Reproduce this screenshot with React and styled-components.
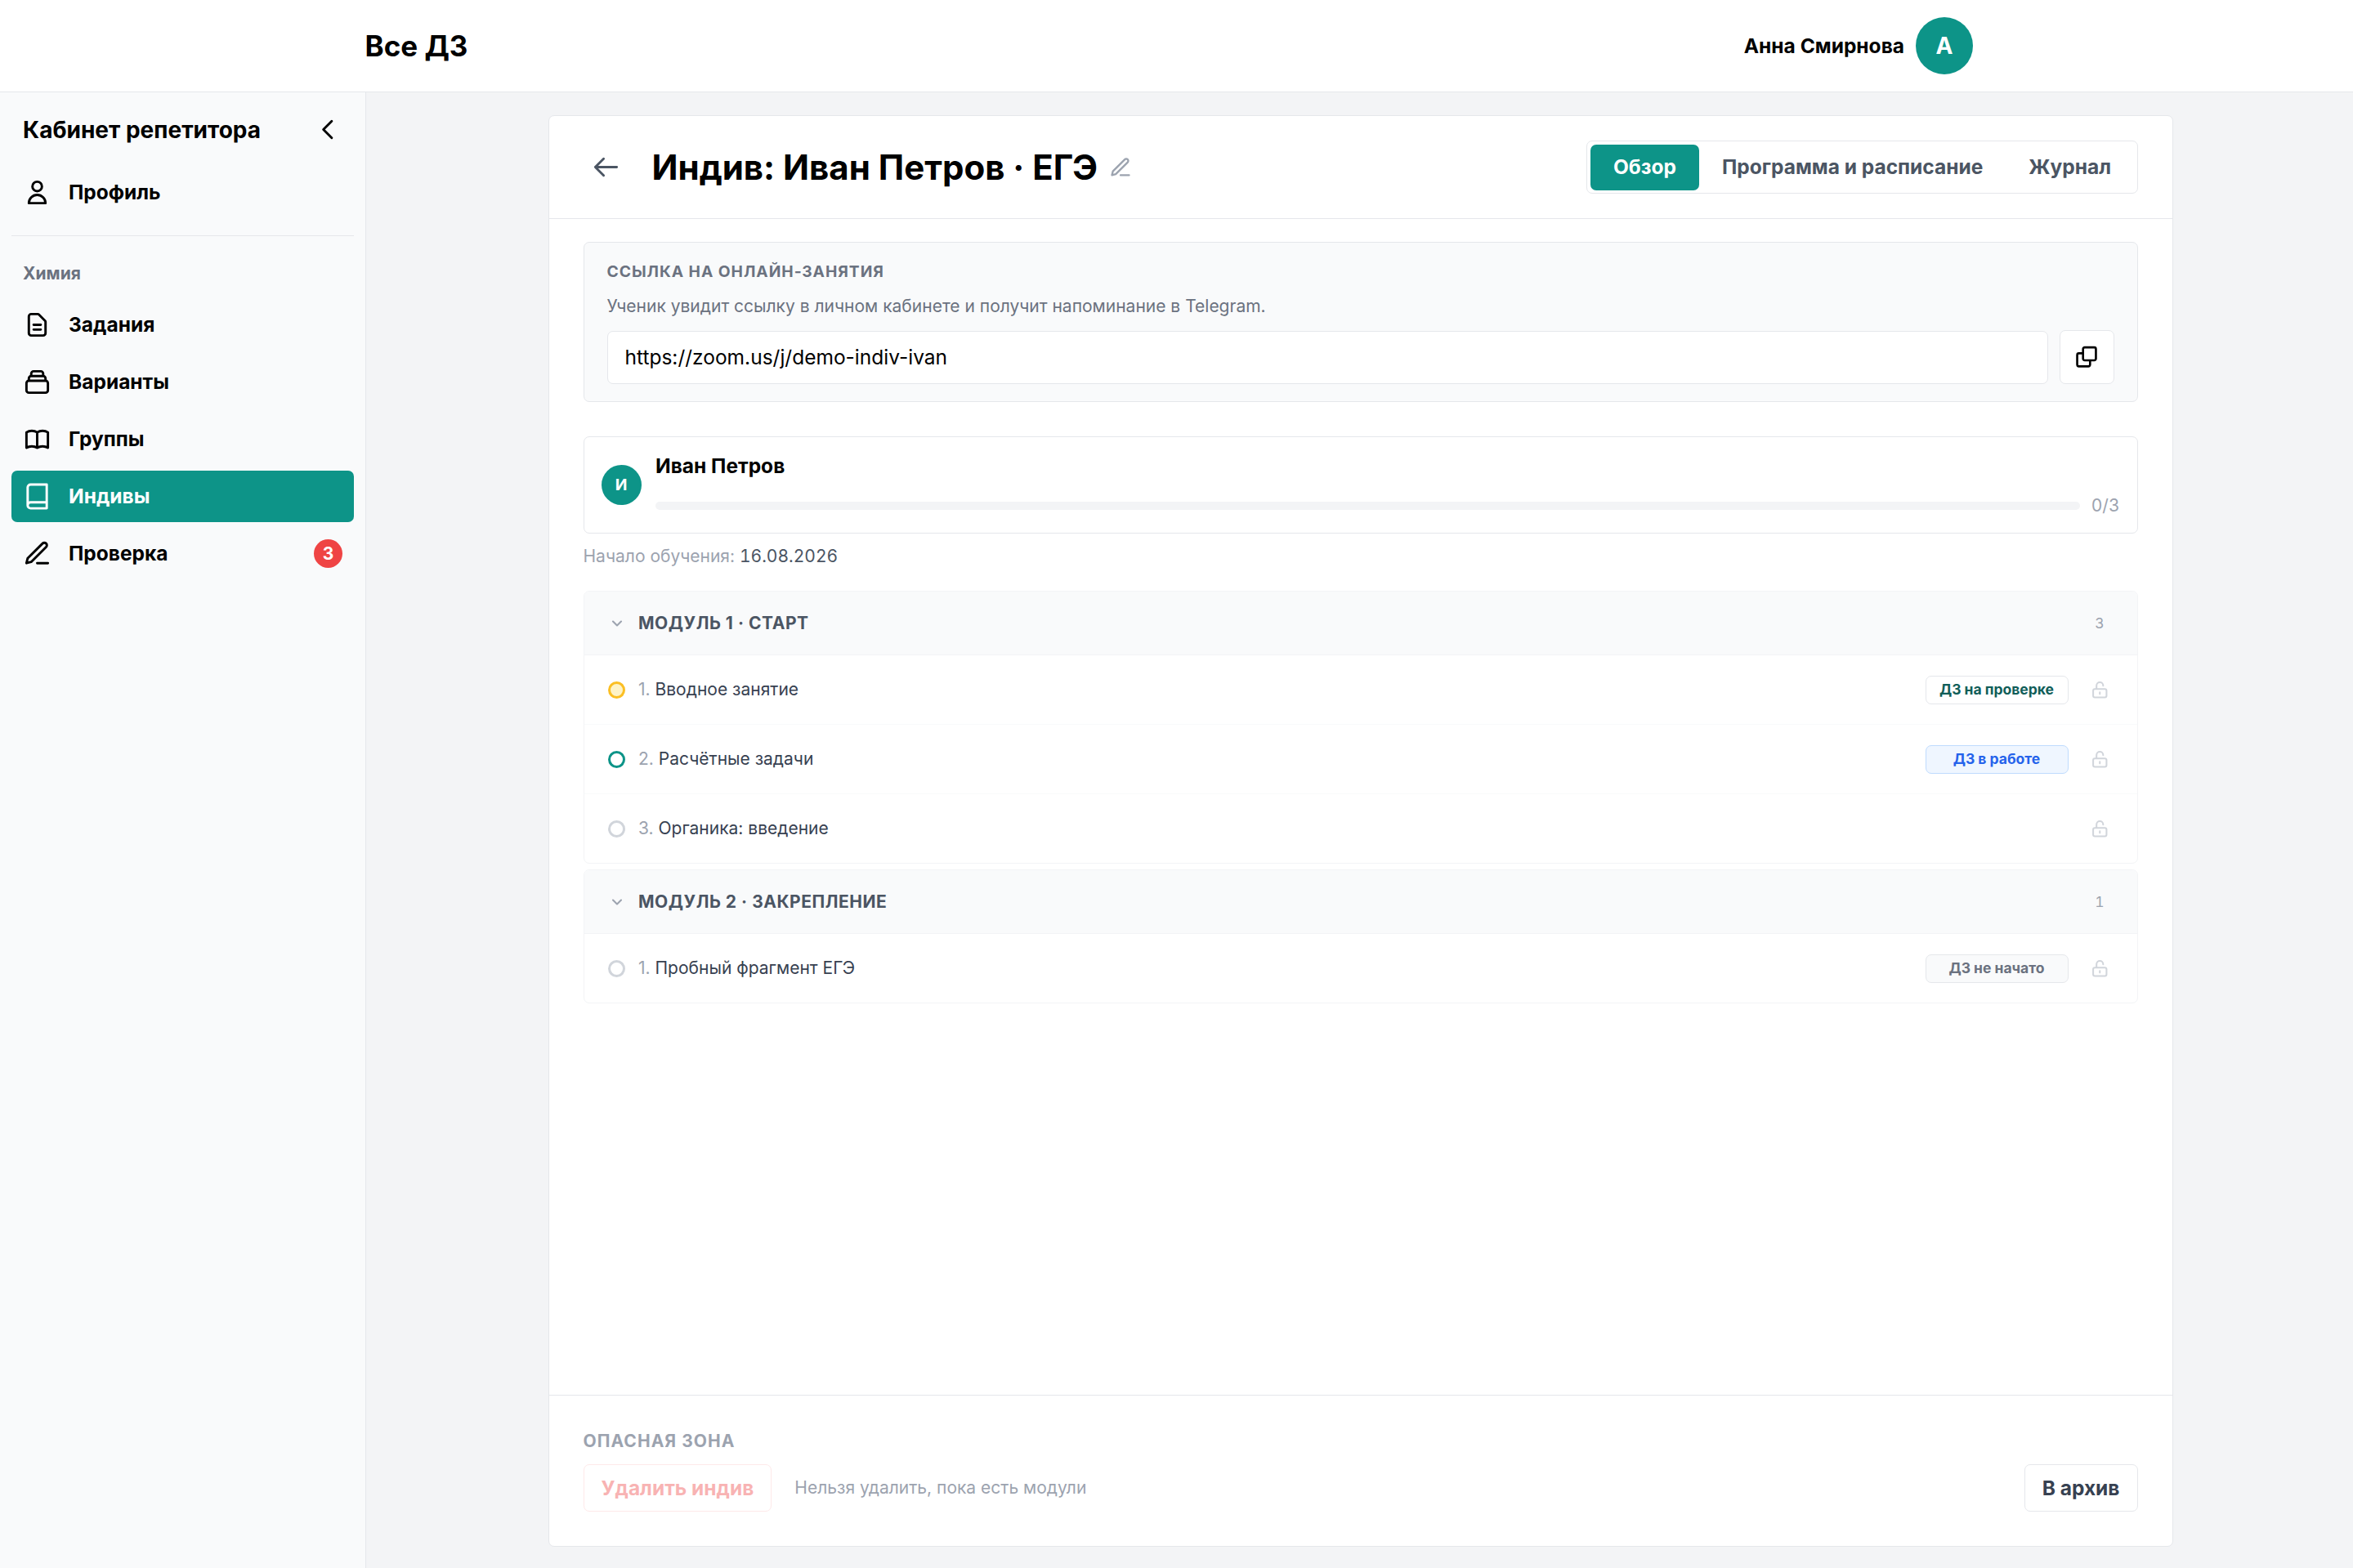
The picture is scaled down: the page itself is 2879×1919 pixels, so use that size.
import styled, { createGlobalStyle } from "styled-components"

const GlobalStyle = createGlobalStyle`
  * {
    box-sizing: border-box;
    margin: 0;
    padding: 0;
  }
  html {
    font-size: 28px;
  }
  body {
    font-family: Inter, "Noto Sans", sans-serif;
    font-size: 0.875rem;
    line-height: 1.25rem;
    color: #000000;
    background-color: #f3f4f6;
  }
  button, input {
    font: inherit;
    color: inherit;
    background: none;
    border: none;
  }
`

const PageWrapper = styled.div`
  display: flex;
  flex-direction: column;
  height: 100vh;
  overflow: hidden;
`

const Header = styled.header`
  display: flex;
  justify-content: space-between;
  align-items: center;
  height: 113px;
  padding: 0 465px 0 446.5px;
  background-color: #ffffff;
  border-bottom: 1px solid #e5e7eb;
`

const Brand = styled.div`
  font-size: 1.25rem;
  line-height: 1.75rem;
  font-weight: 700;
`

const UserBox = styled.div`
  display: flex;
  align-items: center;
  gap: 0.5rem;
  font-weight: 700;
`

const Avatar = styled.div`
  display: flex;
  justify-content: center;
  align-items: center;
  flex-shrink: 0;
  width: ${props => props.$size};
  height: ${props => props.$size};
  border-radius: 50%;
  background-color: #0d9488;
  color: #ffffff;
  font-size: ${props => props.$font};
  font-weight: 700;
`

const Body = styled.div`
  display: flex;
  flex: 1;
  min-height: 0;
`

const Sidebar = styled.aside`
  width: 16rem;
  flex-shrink: 0;
  padding: 1rem 0.5rem;
  background-color: #f9fafb;
  border-right: 1px solid #e5e7eb;
`

const SidebarTop = styled.div`
  display: flex;
  justify-content: space-between;
  align-items: center;
  height: 1.25rem;
  padding: 0 0.5rem;
  margin-bottom: 1rem;
  font-size: 1rem;
  line-height: normal;
  font-weight: 700;
`

const NavList = styled.ul`
  display: flex;
  flex-direction: column;
  gap: 0.25rem;
  list-style: none;
`

const NavItem = styled.li`
  display: flex;
  align-items: center;
  gap: 0.75rem;
  height: 2.25rem;
  padding: 0 0.5rem;
  border-radius: 0.25rem;
  font-weight: 700;
  cursor: pointer;
  ${props => props.$active ? "background-color: #0d9488; color: #ffffff;" : ""}
`

const NavBadge = styled.span`
  display: flex;
  justify-content: center;
  align-items: center;
  width: 1.25rem;
  height: 1.25rem;
  margin-left: auto;
  border-radius: 50%;
  background-color: #ef4444;
  color: #ffffff;
  font-size: 0.75rem;
`

const NavDivider = styled.div`
  height: 1px;
  margin: 0.75rem 0 32px;
  background-color: #e5e7eb;
`

const NavCaption = styled.div`
  padding: 0 0.5rem;
  margin-bottom: 17px;
  font-size: 0.75rem;
  line-height: 1rem;
  font-weight: 700;
  color: #6b7280;
`

const Main = styled.main`
  flex: 1;
  padding: 1rem 0 0 222.5px;
`

const Card = styled.section`
  display: flex;
  flex-direction: column;
  width: 71rem;
  height: 1752px;
  background-color: #ffffff;
  border: 1px solid #e5e7eb;
  border-radius: 0.25rem;
`

const CardHeader = styled.div`
  display: flex;
  align-items: center;
  height: 4.5rem;
  padding: 0 1.5rem;
  border-bottom: 1px solid #e5e7eb;
`

const BackButton = styled.button`
  display: flex;
  justify-content: center;
  align-items: center;
  width: 2rem;
  height: 2rem;
  margin-right: 1rem;
  color: #4b5563;
`

const Title = styled.h1`
  font-size: 1.5rem;
  line-height: 2rem;
  font-weight: 700;
`

const EditButton = styled.button`
  display: flex;
  margin-left: 0.5rem;
  color: #9ca3af;
`

const Tabs = styled.div`
  display: flex;
  margin-left: auto;
  padding: 0.125rem;
  border: 1px solid #e5e7eb;
  border-radius: 0.25rem;
`

const Tab = styled.button`
  height: 2rem;
  padding: 0 1rem;
  border-radius: 0.25rem;
  font-weight: 700;
  ${props => props.$active ? "background-color: #0d9488; color: #ffffff;" : "color: #4b5563;"}
`

const CardBody = styled.div`
  flex: 1;
  padding: 1rem 1.5rem;
`

const LinkBox = styled.div`
  padding: 0.75rem 1rem;
  margin-bottom: 1.5rem;
  background-color: #f9fafb;
  border: 1px solid #e5e7eb;
  border-radius: 0.25rem;
`

const LinkCaption = styled.div`
  font-size: 0.6875rem;
  line-height: 1rem;
  font-weight: 700;
  letter-spacing: 0.05em;
  text-transform: uppercase;
  color: #6b7280;
`

const LinkHint = styled.p`
  margin: 0.5rem 0;
  font-size: 0.75rem;
  line-height: 29.5px;
  color: #6b7280;
`

const LinkRow = styled.div`
  display: flex;
  align-items: flex-end;
  gap: 0.5rem;
`

const LinkInput = styled.input`
  flex: 1;
  height: 65px;
  padding: 0 0.75rem 2px;
  background-color: #ffffff;
  border: 1px solid #e5e7eb;
  border-radius: 0.25rem;
`

const CopyButton = styled.button`
  display: flex;
  justify-content: center;
  align-items: center;
  width: 2.375rem;
  height: 2.375rem;
  background-color: #ffffff;
  border: 1px solid #e5e7eb;
  border-radius: 0.25rem;
`

const StudentBox = styled.div`
  display: flex;
  align-items: center;
  gap: 0.625rem;
  height: 119px;
  padding: 0 0.75rem;
  border: 1px solid #e5e7eb;
  border-radius: 0.25rem;
`

const StudentInfo = styled.div`
  flex: 1;
`

const StudentName = styled.div`
  margin-bottom: 20px;
  line-height: 1.25;
  font-weight: 700;
`

const ProgressRow = styled.div`
  display: flex;
  align-items: center;
  gap: 0.5rem;
  font-size: 0.75rem;
  line-height: 26px;
  color: #9ca3af;
  font-variant-numeric: tabular-nums;
`

const ProgressTrack = styled.div`
  flex: 1;
  height: 0.375rem;
  border-radius: 0.25rem;
  background-color: #f3f4f6;
  overflow: hidden;
`

const ProgressBar = styled.div`
  height: 100%;
  background-color: #0d9488;
`

const StartDate = styled.p`
  margin: 0.5rem 0 1rem;
  font-size: 0.75rem;
  line-height: 1rem;
  color: #9ca3af;

  span {
    color: #4b5563;
    font-variant-numeric: tabular-nums;
  }
`

const Module = styled.div`
  margin-bottom: 0.25rem;
  border: 1px solid #f3f4f6;
  border-radius: 0.25rem;
  overflow: hidden;
`

const ModuleHeader = styled.div`
  display: flex;
  align-items: center;
  gap: 0.5rem;
  height: 78px;
  padding: 0 1rem;
  background-color: #f9fafb;
  border-bottom: 1px solid #f3f4f6;
`

const MarkCell = styled.div`
  display: flex;
  justify-content: center;
  width: 0.875rem;
  color: #9ca3af;
`

const ModuleName = styled.div`
  flex: 1;
  font-size: 0.75rem;
  line-height: 1rem;
  font-weight: 700;
  letter-spacing: 0.025em;
  text-transform: uppercase;
  color: #4b5563;
`

const EndCell = styled.div`
  display: flex;
  justify-content: center;
  width: 1.25rem;
  font-size: 0.625rem;
  line-height: 1rem;
  font-variant-numeric: tabular-nums;
  color: ${props => props.$muted ? "#d1d5db" : "#9ca3af"};
`

const LessonRow = styled.div`
  display: flex;
  align-items: center;
  gap: 0.5rem;
  height: 85px;
  padding: 0 1rem;
  border-bottom: 1px solid #f9fafb;

  &:last-child {
    height: 3rem;
    border-bottom: none;
  }
`

const dotColors = {
  review: "border-color: #fbbf24; background-color: #fef3c7;",
  progress: "border-color: #0d9488;",
  idle: "border-color: #d1d5db;",
}

const Dot = styled.span`
  flex-shrink: 0;
  width: 0.75rem;
  height: 0.75rem;
  border: 3px solid;
  border-radius: 50%;
  ${props => dotColors[props.$state]}
`

const LessonName = styled.div`
  flex: 1;
  font-size: 0.75rem;
  line-height: 1rem;
  color: #374151;

  span {
    color: #9ca3af;
  }
`

const badgeColors = {
  review: "color: #115e59; background-color: #ffffff; border-color: #e5e7eb;",
  progress: "color: #2563eb; background-color: #eff6ff; border-color: #bfdbfe;",
  idle: "color: #6b7280; background-color: #f9fafb; border-color: #e5e7eb;",
}

const StatusBadge = styled.span`
  display: flex;
  justify-content: center;
  align-items: center;
  width: 6.25rem;
  height: 1.25rem;
  margin-right: 0.25rem;
  border: 1px solid;
  border-radius: 0.25rem;
  font-size: 0.625rem;
  line-height: 1;
  font-weight: 700;
  ${props => badgeColors[props.$state]}
`

const DangerZone = styled.div`
  padding: 1.5rem;
  border-top: 1px solid #e5e7eb;
`

const DangerCaption = styled.div`
  margin-bottom: 0.5rem;
  font-size: 0.75rem;
  line-height: 1rem;
  font-weight: 700;
  letter-spacing: 0.05em;
  text-transform: uppercase;
  color: #9ca3af;
`

const DangerRow = styled.div`
  display: flex;
  align-items: center;
`

const ActionButton = styled.button`
  height: 58px;
  padding: 0 0.75rem;
  border: 1px solid ${props => props.$danger ? "#fecaca" : "#e5e7eb"};
  border-radius: 0.25rem;
  font-weight: 700;
  color: ${props => props.$danger ? "#ef4444" : "#374151"};

  &:disabled {
    opacity: 0.4;
  }
`

const DangerHint = styled.span`
  flex: 1;
  margin-left: 1rem;
  font-size: 0.75rem;
  line-height: 1rem;
  color: #9ca3af;
`

const icons = {
  user: "M16 7a4 4 0 11-8 0 4 4 0 018 0zM12 14a7 7 0 00-7 7h14a7 7 0 00-7-7z",
  document: "M9 12h6m-6 4h6m2 5H7a2 2 0 01-2-2V5a2 2 0 012-2h5.586a1 1 0 01.707.293l5.414 5.414a1 1 0 01.293.707V19a2 2 0 01-2 2z",
  collection: "M19 11H5m14 0a2 2 0 012 2v6a2 2 0 01-2 2H5a2 2 0 01-2-2v-6a2 2 0 012-2m14 0V9a2 2 0 00-2-2M5 11V9a2 2 0 012-2m0 0V5a2 2 0 012-2h6a2 2 0 012 2v2M7 7h10",
  bookOpen: "M12 6.253v13m0-13C10.832 5.477 9.246 5 7.5 5S4.168 5.477 3 6.253v13C4.168 18.477 5.754 18 7.5 18s3.332.477 4.5 1.253m0-13C13.168 5.477 14.754 5 16.5 5c1.747 0 3.332.477 4.5 1.253v13C19.832 18.477 18.247 18 16.5 18c-1.746 0-3.332.477-4.5 1.253",
  book: "M4 19.5A2.5 2.5 0 016.5 17H20M6.5 2H20v20H6.5A2.5 2.5 0 014 19.5v-15A2.5 2.5 0 016.5 2z",
  edit: "M12 20h9M16.5 3.5a2.121 2.121 0 013 3L7 19l-4 1 1-4L16.5 3.5z",
  copy: "M10.1 4.2h8A1.4 1.4 0 0119.5 5.6v8.1a1.4 1.4 0 01-1.4 1.4h-8A1.4 1.4 0 018.7 13.7V5.6A1.4 1.4 0 0110.1 4.2zM8.7 9.2H5.2A1.4 1.4 0 003.8 10.6v8.1A1.4 1.4 0 005.2 20.1h8a1.4 1.4 0 001.4-1.4V15.1",
  chevronLeft: "M15 19l-7-7 7-7",
  chevronDown: "M6 9l6 6 6-6",
  arrowLeft: "M10 19l-7-7m0 0l7-7m-7 7h18",
  lockOpen: "M8 11V7a4 4 0 118 0m-4 8v2m-6 4h12a2 2 0 002-2v-6a2 2 0 00-2-2H6a2 2 0 00-2 2v6a2 2 0 002 2z",
}

function Icon({ name, size = 35, stroke = 2 }) {
  return (
    <svg width={size} height={size} viewBox="0 0 24 24" fill="none" stroke="currentColor" strokeWidth={stroke} strokeLinecap="round" strokeLinejoin="round">
      <path d={icons[name]} />
    </svg>
  );
}

const menu = [
  { icon: "document", label: "Задания" },
  { icon: "collection", label: "Варианты" },
  { icon: "bookOpen", label: "Группы" },
  { icon: "book", label: "Индивы", active: true },
  { icon: "edit", label: "Проверка", badge: 3 },
]

const modules = [
  {
    name: "Модуль 1 · Старт",
    lessons: [
      { name: "Вводное занятие", dot: "review", status: "review", text: "ДЗ на проверке" },
      { name: "Расчётные задачи", dot: "progress", status: "progress", text: "ДЗ в работе" },
      { name: "Органика: введение", dot: "idle" },
    ],
  },
  {
    name: "Модуль 2 · Закрепление",
    lessons: [
      { name: "Пробный фрагмент ЕГЭ", dot: "idle", status: "idle", text: "ДЗ не начато" },
    ],
  },
]

const progress = { done: 0, total: 3 }

function SideMenu() {
  return (
    <Sidebar>
      <SidebarTop>
        Кабинет репетитора
        <Icon name="chevronLeft" />
      </SidebarTop>
      <NavList>
        <NavItem>
          <Icon name="user" />
          Профиль
        </NavItem>
      </NavList>
      <NavDivider />
      <NavCaption>Химия</NavCaption>
      <NavList>
        {menu.map(item => (
          <NavItem key={item.label} $active={item.active}>
            <Icon name={item.icon} />
            {item.label}
            {item.badge && <NavBadge>{item.badge}</NavBadge>}
          </NavItem>
        ))}
      </NavList>
    </Sidebar>
  );
}

function ModuleBlock({ name, lessons }) {
  return (
    <Module>
      <ModuleHeader>
        <MarkCell><Icon name="chevronDown" size={20} stroke={2.5} /></MarkCell>
        <ModuleName>{name}</ModuleName>
        <EndCell>{lessons.length}</EndCell>
      </ModuleHeader>
      {lessons.map((lesson, index) => (
        <LessonRow key={lesson.name}>
          <MarkCell><Dot $state={lesson.dot} /></MarkCell>
          <LessonName><span>{index + 1}.</span> {lesson.name}</LessonName>
          {lesson.status && <StatusBadge $state={lesson.status}>{lesson.text}</StatusBadge>}
          <EndCell $muted><Icon name="lockOpen" size={24.5} /></EndCell>
        </LessonRow>
      ))}
    </Module>
  );
}

function App() {
  return (
    <PageWrapper>
      <GlobalStyle />
      <Header>
        <Brand>Все ДЗ</Brand>
        <UserBox>
          Анна Смирнова
          <Avatar $size="2.5rem" $font="1rem">А</Avatar>
        </UserBox>
      </Header>
      <Body>
        <SideMenu />
        <Main>
          <Card>
            <CardHeader>
              <BackButton><Icon name="arrowLeft" /></BackButton>
              <Title>Индив: Иван Петров · ЕГЭ</Title>
              <EditButton><Icon name="edit" size={28} /></EditButton>
              <Tabs>
                <Tab $active>Обзор</Tab>
                <Tab>Программа и расписание</Tab>
                <Tab>Журнал</Tab>
              </Tabs>
            </CardHeader>
            <CardBody>
              <LinkBox>
                <LinkCaption>Ссылка на онлайн-занятия</LinkCaption>
                <LinkHint>Ученик увидит ссылку в личном кабинете и получит напоминание в Telegram.</LinkHint>
                <LinkRow>
                  <LinkInput defaultValue="https://zoom.us/j/demo-indiv-ivan" />
                  <CopyButton><Icon name="copy" stroke={1.8} /></CopyButton>
                </LinkRow>
              </LinkBox>
              <StudentBox>
                <Avatar $size="1.75rem" $font="0.6875rem">И</Avatar>
                <StudentInfo>
                  <StudentName>Иван Петров</StudentName>
                  <ProgressRow>
                    <ProgressTrack>
                      <ProgressBar style={{ width: `${progress.done / progress.total * 100}%` }} />
                    </ProgressTrack>
                    {progress.done}/{progress.total}
                  </ProgressRow>
                </StudentInfo>
              </StudentBox>
              <StartDate>Начало обучения: <span>16.08.2026</span></StartDate>
              {modules.map(item => <ModuleBlock key={item.name} {...item} />)}
            </CardBody>
            <DangerZone>
              <DangerCaption>Опасная зона</DangerCaption>
              <DangerRow>
                <ActionButton $danger disabled>Удалить индив</ActionButton>
                <DangerHint>Нельзя удалить, пока есть модули</DangerHint>
                <ActionButton>В архив</ActionButton>
              </DangerRow>
            </DangerZone>
          </Card>
        </Main>
      </Body>
    </PageWrapper>
  );
}

export default App;
